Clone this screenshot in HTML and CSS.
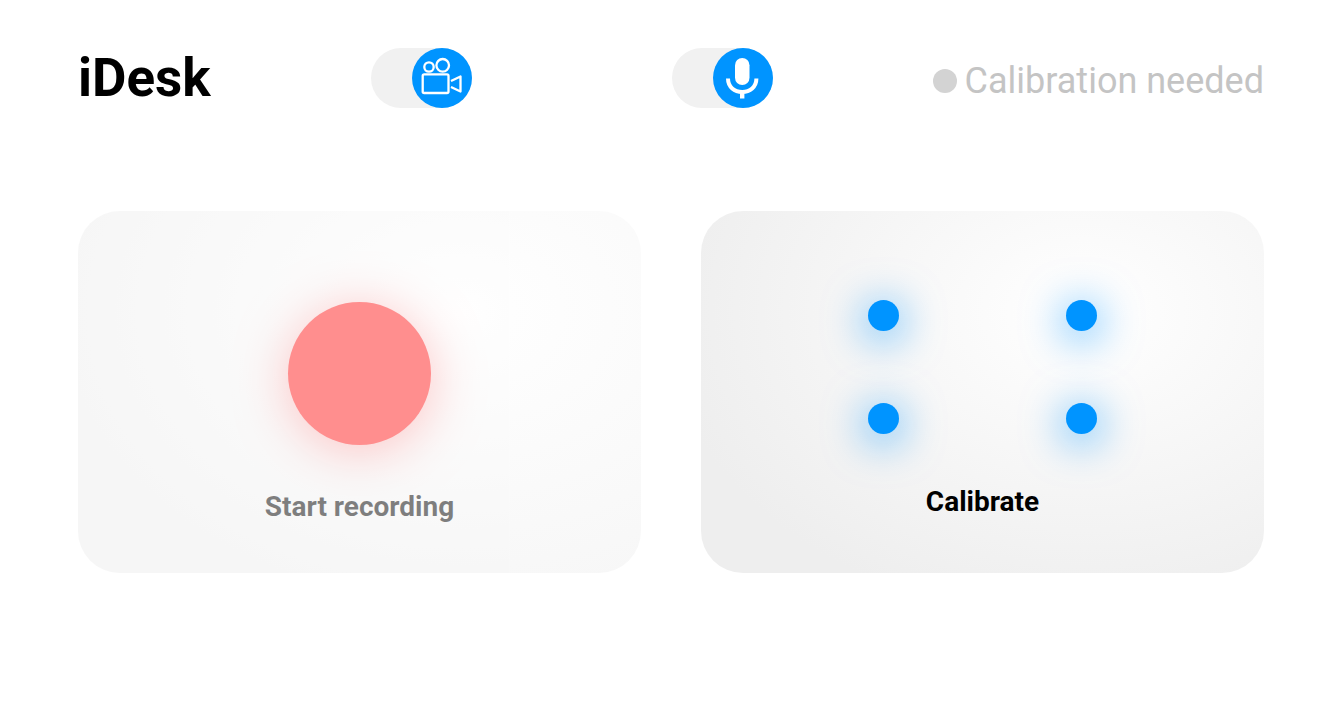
FILE: index.html
```html
<!DOCTYPE html>
<html lang="en">
<head>
  <meta charset="UTF-8" />
  <meta name="viewport" content="width=device-width, initial-scale=1" />
  <title>iDesk</title>
  <link rel="stylesheet" href="styles.css">
</head>
<body>
  <header class="topbar">
    <h1 class="logo">iDesk</h1>

    <div class="toggles">
      <label class="toggle">
        <input type="checkbox" class="toggle-input" aria-label="Camera" checked>
        <span class="toggle-knob">
          <svg width="60" height="60" viewBox="0 0 60 60" fill="none" stroke="#fff" stroke-width="2.3" stroke-linejoin="round">
            <circle cx="17" cy="19" r="4.7" />
            <circle cx="30.7" cy="17.3" r="6.3" />
            <rect x="10.7" y="26.3" width="25.8" height="18.7" rx="1.5" />
            <path d="M39 33L48.5 28.5V43.5L39 39" />
          </svg>
        </span>
      </label>
      <label class="toggle">
        <input type="checkbox" class="toggle-input" aria-label="Microphone" checked>
        <span class="toggle-knob">
          <svg width="60" height="60" viewBox="0 0 60 60" fill="none">
            <rect x="22" y="10" width="14.5" height="27" rx="7.25" fill="#fff" />
            <path d="M15 30.5C15 39 21.5 44 29.2 44S43.4 39 43.4 30.5" stroke="#fff" stroke-width="4" />
            <path d="M29.2 43V50.5" stroke="#fff" stroke-width="4.4" />
          </svg>
        </span>
      </label>
    </div>

    <div class="status">
      <span class="status-dot"></span>
      <span>Calibration needed</span>
    </div>
  </header>

  <main class="cards">
    <button class="card card-record" disabled>
      <span class="record-circle"></span>
      <span>Start recording</span>
    </button>
    <button class="card card-calibrate">
      <span class="dots">
        <span class="dot"></span>
        <span class="dot"></span>
        <span class="dot"></span>
        <span class="dot"></span>
      </span>
      <span>Calibrate</span>
    </button>
  </main>
</body>
</html>
```

FILE: styles.css
```css
* {
  box-sizing: border-box;
}
body {
  margin: 0;
  padding: 46px 76px 46px 78px;
  background: #fff;
  color: #000;
  font-family: Roboto, sans-serif;
}
.topbar {
  display: flex;
  justify-content: space-between;
  align-items: center;
  margin-bottom: 101px;
}
.logo {
  margin: 0;
  font-size: 53px;
  line-height: 64px;
  font-weight: bold;
}
.toggles {
  display: flex;
  gap: 200px;
}
.toggle {
  position: relative;
  display: flex;
  width: 101px;
  height: 60px;
  border-radius: 30px;
  background: #f1f1f1;
  cursor: pointer;
}
.toggle-input {
  position: absolute;
  inset: 0;
  width: 100%;
  height: 100%;
  margin: 0;
  opacity: 0;
  cursor: pointer;
}
.toggle-knob {
  width: 60px;
  height: 60px;
  border-radius: 50%;
  background: #999;
  pointer-events: none;
}
.toggle-input:checked + .toggle-knob {
  margin-left: auto;
  background: #0094ff;
}
.toggle-knob svg {
  display: block;
}
.status {
  display: flex;
  align-items: center;
  gap: 8px;
  padding-top: 5px;
  font-size: 36px;
  line-height: 44px;
  color: #c4c4c4;
}
.status-dot {
  width: 24px;
  height: 24px;
  border-radius: 50%;
  background: #d3d3d3;
}
.cards {
  display: grid;
  grid-template-columns: 1fr 1fr;
  gap: 60px;
}
.card {
  display: flex;
  flex-direction: column;
  justify-content: flex-start;
  align-items: center;
  padding: 91px 40px 50px;
  border: none;
  border-radius: 42px;
  background: radial-gradient(75% 85% at 68% 28%, #fff, #eee);
  color: #000;
  font-family: inherit;
  font-size: 28px;
  line-height: 32px;
  font-weight: bold;
  cursor: pointer;
}
.card:disabled {
  opacity: 0.5;
  cursor: default;
}
.card-record {
  gap: 46px;
}
.card-calibrate {
  gap: 52px;
  padding-top: 89px;
}
.record-circle {
  width: 143px;
  height: 143px;
  border-radius: 50%;
  background: #ff2020;
  box-shadow: 0 6px 50px rgba(255, 32, 32, 0.5);
}
.dots {
  display: grid;
  grid-template-columns: auto auto;
  gap: 72px 167px;
}
.dot {
  width: 31px;
  height: 31px;
  border-radius: 50%;
  background: #0094ff;
  box-shadow: 0 6px 40px 4px rgba(0, 148, 255, 0.6);
}
```
